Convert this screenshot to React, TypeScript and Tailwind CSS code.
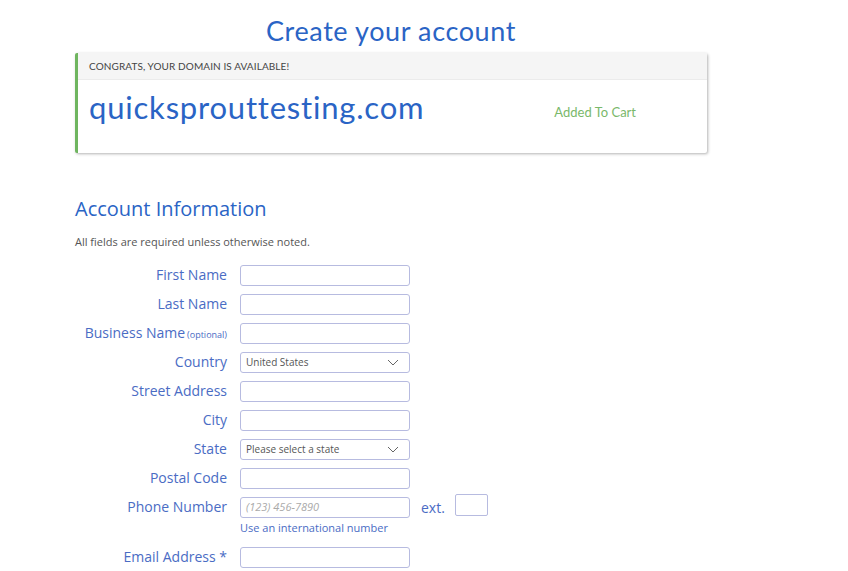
import React from 'react';

const labelCls = "text-right text-[14px] leading-none text-[#4a6cc4]";
const inputCls = "h-[21px] w-[170px] rounded-[3px] border border-[#b7bbe0] bg-white";

const Field = ({ label, note, children }: { label: string; note?: string; children?: React.ReactNode }) => (
  <div className="flex items-center h-[29px]">
    <div className={`${labelCls} w-[152px]`}>
      {label}
      {note && <span className="text-[9px] text-[#4a6cc4] ml-[2px]">{note}</span>}
    </div>
    <div className="ml-[13px]">{children ?? <div className={inputCls} />}</div>
  </div>
);

const Select = ({ text }: { text: string }) => (
  <div className={`${inputCls} flex items-center justify-between px-[5px]`}>
    <span className="text-[10px] text-[#555]">{text}</span>
    <svg width="12" height="7" viewBox="0 0 12 7" className="mr-[5px]">
      <path d="M1 1l5 5 5-5" fill="none" stroke="#666" strokeWidth="1" />
    </svg>
  </div>
);

export default function App() {
  return (
    <div className="min-h-screen bg-white font-['Open_Sans',sans-serif]">
      <div className="ml-[75px] w-[632px]">
        {/* title */}
        <h1 className="pt-[13px] text-center text-[27px] leading-[36px] text-[#2a64c5] font-['Lato',sans-serif] tracking-[0.6px]">
          Create your account
        </h1>

        {/* domain card */}
        <div className="mt-[4px] h-[100px] border-l-[3px] border-[#6fb55f] bg-white shadow-[1px_1px_3px_rgba(0,0,0,0.3)] rounded-[2px]">
          <div className="h-[27px] bg-[#f5f5f5] border-b border-[#ebebeb] pl-[11px] flex items-center">
            <span className="text-[10px] text-[#444] font-['Lato',sans-serif] tracking-[0.1px]">CONGRATS, YOUR DOMAIN IS AVAILABLE!</span>
          </div>
          <div className="flex items-center h-[55px]">
            <span className="pl-[11px] text-[31px] text-[#2a64c5] font-['Lato',sans-serif] tracking-[0.8px]">quicksprouttesting.com</span>
            <span className="ml-auto mr-[71px] mt-[11px] text-[13px] text-[#7ab86a] font-['Lato',sans-serif]">Added To Cart</span>
          </div>
        </div>

        {/* account info */}
        <h2 className="mt-[42px] text-[20px] leading-[28px] text-[#2a64c5]">Account Information</h2>
        <p className="mt-[11px] text-[11px] text-[#555]">All fields are required unless otherwise noted.</p>

        <div className="mt-[10px]">
          <Field label="First Name" />
          <Field label="Last Name" />
          <Field label="Business Name" note="(optional)" />
          <Field label="Country"><Select text="United States" /></Field>
          <Field label="Street Address" />
          <Field label="City" />
          <Field label="State"><Select text="Please select a state" /></Field>
          <Field label="Postal Code" />
          <div className="flex items-center h-[29px]">
            <div className={`${labelCls} w-[152px]`}>Phone Number</div>
            <div className="ml-[13px] flex items-center">
              <div className={`${inputCls} flex items-center px-[5px]`}>
                <span className="text-[11px] italic text-[#aaa]">(123) 456-7890</span>
              </div>
              <span className="ml-[11px] text-[14px] text-[#4a6cc4]">ext.</span>
              <div className="ml-[10px] mb-[4px] h-[22px] w-[33px] rounded-[2px] border border-[#b7bbe0]" />
            </div>
          </div>
          <div className="ml-[165px] text-[11px] text-[#4a6cc4] leading-none">Use an international number</div>
          <div className="mt-[10px]">
            <Field label="Email Address *" />
          </div>
        </div>
      </div>
    </div>
  );
}
